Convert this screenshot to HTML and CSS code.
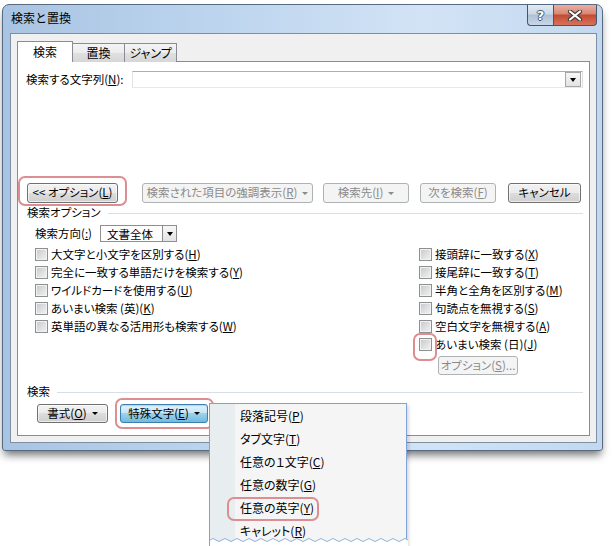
FILE: index.html
```html
<!DOCTYPE html>
<html lang="ja">
  <head>
    <meta charset="UTF-8" />
    <title>検索と置換</title>
    <link rel="stylesheet" href="styles.css">
  </head>
  <body>
    <div class="window">
      <div class="titlebar">
        <span class="title">検索と置換</span>
        <div class="caption-buttons">
          <span class="cap-btn help">?</span>
          <span class="cap-btn close">
            <svg width="16" height="11" viewBox="0 0 16 11">
              <path d="M3 1.5 L13 9.5 M13 1.5 L3 9.5" stroke="#3a3a3a" stroke-width="4.2" stroke-linecap="round"/>
              <path d="M3 1.5 L13 9.5 M13 1.5 L3 9.5" stroke="#fff" stroke-width="2.2" stroke-linecap="round"/>
            </svg>
          </span>
        </div>
      </div>

      <div class="client">
        <div class="tabs">
          <div class="tab active">検索</div>
          <div class="tab">置換</div>
          <div class="tab">ジャンプ</div>
        </div>

        <div class="panel">
          <div class="find-row">
            <label class="find-label">検索する文字列(<u>N</u>):</label>
            <div class="combo"><span class="drop-btn"><span class="arrow"></span></span></div>
          </div>

          <div class="action-row">
            <span class="marked btn-options">
              <span class="btn">&lt;&lt; オプション(<u>L</u>)</span>
              <span class="ring ring-options"></span>
            </span>
            <span class="btn disabled btn-highlight">検索された項目の強調表示(<u>R</u>)<span class="caret"></span></span>
            <span class="btn disabled btn-findin">検索先(<u>I</u>)<span class="caret"></span></span>
            <span class="btn disabled btn-next">次を検索(<u>F</u>)</span>
            <span class="btn btn-cancel">キャンセル</span>
          </div>

          <div class="group-head">検索オプション</div>

          <div class="direction-row">
            <label class="direction-label">検索方向(<u>:</u>)</label>
            <div class="select">
              <span class="select-text">文書全体</span>
              <span class="select-btn"><span class="arrow"></span></span>
            </div>
          </div>

          <div class="options">
            <div class="opt-col left">
              <label class="check"><span class="box"></span>大文字と小文字を区別する(<u>H</u>)</label>
              <label class="check"><span class="box"></span>完全に一致する単語だけを検索する(<u>Y</u>)</label>
              <label class="check"><span class="box"></span>ワイルドカードを使用する(<u>U</u>)</label>
              <label class="check"><span class="box"></span>あいまい検索 (英)(<u>K</u>)</label>
              <label class="check"><span class="box"></span>英単語の異なる活用形も検索する(<u>W</u>)</label>
            </div>
            <div class="opt-col right">
              <label class="check"><span class="box"></span>接頭辞に一致する(<u>X</u>)</label>
              <label class="check"><span class="box"></span>接尾辞に一致する(<u>T</u>)</label>
              <label class="check"><span class="box"></span>半角と全角を区別する(<u>M</u>)</label>
              <label class="check"><span class="box"></span>句読点を無視する(<u>S</u>)</label>
              <label class="check"><span class="box"></span>空白文字を無視する(<u>A</u>)</label>
              <label class="check"><span class="box marked"><span class="ring ring-check"></span></span>あいまい検索 (日)(<u>J</u>)</label>
              <span class="btn disabled btn-fuzzy">オプション(<u>S</u>)...</span>
            </div>
          </div>

          <div class="group-head">検索</div>

          <div class="bottom-row">
            <span class="btn btn-format">書式(<u>O</u>)<span class="caret"></span></span>
            <span class="marked btn-special">
              <span class="btn pressed">特殊文字(<u>E</u>)<span class="caret"></span></span>
              <span class="ring ring-special"></span>
            </span>
          </div>
        </div>
      </div>
    </div>

    <div class="menu">
      <div class="menu-item">段落記号(<u>P</u>)</div>
      <div class="menu-item">タブ文字(<u>T</u>)</div>
      <div class="menu-item">任意の１文字(<u>C</u>)</div>
      <div class="menu-item">任意の数字(<u>G</u>)</div>
      <div class="menu-item">任意の英字(<u>Y</u>)<span class="ring ring-item"></span></div>
      <div class="menu-item">キャレット(<u>R</u>)</div>
      <svg class="torn" width="198" height="10" viewBox="0 0 198 10">
        <path d="M0 4 q3 -3 6 0 t6 0 t6 0 t6 0 t6 0 t6 0 t6 0 t6 0 t6 0 t6 0 t6 0 t6 0 t6 0 t6 0 t6 0 t6 0 t6 0 t6 0 t6 0 t6 0 t6 0 t6 0 t6 0 t6 0 t6 0 t6 0 t6 0 t6 0 t6 0 t6 0 t6 0 t6 0 t6 0 L198 10 L0 10 Z" fill="#fff"/>
        <path d="M0 4 q3 -3 6 0 t6 0 t6 0 t6 0 t6 0 t6 0 t6 0 t6 0 t6 0 t6 0 t6 0 t6 0 t6 0 t6 0 t6 0 t6 0 t6 0 t6 0 t6 0 t6 0 t6 0 t6 0 t6 0 t6 0 t6 0 t6 0 t6 0 t6 0 t6 0 t6 0 t6 0 t6 0 t6 0" fill="none" stroke="#8eb0e0" stroke-width="1"/>
      </svg>
    </div>
  </body>
</html>
```

FILE: styles.css
```css
* {
  box-sizing: border-box;
}

body {
  margin: 0;
  width: 612px;
  height: 546px;
  overflow: hidden;
  position: relative;
  background-color: #fff;
  font-family: "Noto Sans CJK JP", sans-serif;
  font-size: 12px;
  font-feature-settings: "palt";
  color: #000;
}

u {
  text-underline-offset: 1px;
}

label {
  cursor: default;
}

/* window frame */

.window {
  width: 601px;
  margin: 4px 0 0 2px;
  padding: 0 5px 7px 7px;
  border: 1px solid #566b82;
  border-radius: 7px 7px 3px 3px;
  background: linear-gradient(to right, #a9c4e2 0%, #bcd4ee 35%, #d2e3f5 70%, #c3d8ef 100%);
  box-shadow: 0 6px 8px -2px rgba(0, 0, 0, 0.55);
}

.titlebar {
  display: flex;
  justify-content: space-between;
  align-items: flex-start;
  height: 28px;
}

.title {
  padding-left: 1px;
  line-height: 25px;
  font-feature-settings: normal;
}

.caption-buttons {
  display: flex;
  height: 21px;
}

.cap-btn {
  display: flex;
  align-items: center;
  justify-content: center;
  height: 21px;
  border: 1px solid #44566b;
  border-top: none;
}

.help {
  width: 26px;
  border-right: none;
  border-radius: 0 0 0 4px;
  background: linear-gradient(#e2eaf3 0%, #cad7e6 45%, #afc0d5 50%, #c8d7e8 100%);
  font-family: "DejaVu Sans", sans-serif;
  font-weight: bold;
  font-size: 13px;
  color: #fff;
  text-shadow: -1px 0 #4b5563, 1px 0 #4b5563, 0 -1px #4b5563, 0 1px #4b5563;
}

.close {
  width: 44px;
  border-radius: 0 0 4px 0;
  background: linear-gradient(#eaafa2 0%, #d98571 45%, #c44a31 50%, #d7725c 100%);
}

.client {
  height: 410px;
  padding: 7px 6px 0 6px;
  border: 1px solid #7d8fa3;
  background-color: #f0f0f0;
}

/* tabs */

.tabs {
  display: flex;
  align-items: flex-end;
  height: 21px;
  margin-bottom: -1px;
  position: relative;
  z-index: 1;
}

.tab {
  width: 53px;
  height: 19px;
  margin-left: -1px;
  border: 1px solid #898c95;
  border-bottom: none;
  background: linear-gradient(#f4f4f4 0%, #ececec 50%, #e0e0e0 50%, #d6d6d6 100%);
  text-align: center;
  line-height: 17px;
}

.tab.active {
  width: 56px;
  height: 21px;
  margin-left: 0;
  background: #fff;
  line-height: 19px;
  position: relative;
  z-index: 1;
}

.panel {
  height: 375px;
  padding: 9px 6px 0 8px;
  border: 1px solid #898c95;
  background-color: #fff;
  font-size: 11.5px;
}

/* find row */

.find-row {
  display: flex;
  height: 17px;
}

.find-label {
  width: 106px;
  line-height: 17px;
}

.combo {
  flex: 1;
  display: flex;
  justify-content: flex-end;
  align-items: center;
  padding-right: 1px;
  border: 1px solid #abadb3;
  border-color: #abadb3 #dbdfe6 #e3e9ef #e2e3ea;
}

.drop-btn,
.select-btn {
  display: flex;
  align-items: center;
  justify-content: center;
  width: 16px;
  height: 15px;
  border: 1px solid #a7a7a7;
  background: linear-gradient(#f7f7f7, #e3e3e3);
}

.arrow {
  width: 0;
  height: 0;
  border-left: 3.5px solid transparent;
  border-right: 3.5px solid transparent;
  border-top: 4px solid #000;
  margin-top: 1px;
}

/* buttons */

.btn {
  display: flex;
  align-items: center;
  justify-content: center;
  height: 20px;
  border: 1px solid #707070;
  border-radius: 3px;
  background: linear-gradient(#f2f2f2 0%, #ebebeb 50%, #dddddd 50%, #cfcfcf 100%);
  box-shadow: inset 0 0 0 1px rgba(255, 255, 255, 0.6);
  white-space: nowrap;
  line-height: 1;
}

.btn.disabled {
  border-color: #adb2b5;
  background: #f4f4f4;
  box-shadow: none;
  color: #8a8a8a;
}

.btn.pressed {
  border-color: #3c7fb1;
  background: linear-gradient(#e3f3fc 0%, #c4e4f6 50%, #9dd2ef 50%, #72b9df 100%);
  box-shadow: inset 0 1px 1px rgba(0, 0, 0, 0.15);
}

.caret {
  width: 0;
  height: 0;
  margin-left: 5px;
  border-left: 3px solid transparent;
  border-right: 3px solid transparent;
  border-top: 3px solid currentColor;
}

.marked {
  position: relative;
  display: block;
}

.ring {
  position: absolute;
  border: 2px solid #dc8e90;
  border-radius: 7px;
  pointer-events: none;
}

.action-row {
  display: flex;
  height: 20px;
  margin-top: 95px;
}

.btn-options {
  width: 91px;
  margin-left: 1px;
}

.ring-options {
  top: -7px;
  right: -9px;
  bottom: -3px;
  left: -9px;
}

.btn-highlight {
  width: 171px;
  margin-left: 24px;
}

.btn-findin {
  width: 86px;
  margin-left: 10px;
}

.btn-next {
  width: 76px;
  margin-left: 11px;
}

.btn-cancel {
  width: 73px;
  margin-left: 12px;
}

/* group headings */

.group-head {
  display: flex;
  align-items: center;
  height: 16px;
  margin-top: 1px;
  padding-left: 1px;
  line-height: 16px;
}

.group-head::after {
  content: "";
  flex: 1;
  height: 1px;
  margin: 2px 0 0 7px;
  background-color: #d5dfe5;
}

/* search direction */

.direction-row {
  display: flex;
  height: 17px;
  margin-top: 5px;
  padding-left: 9px;
}

.direction-label {
  width: 65px;
  line-height: 17px;
}

.select {
  display: flex;
  align-items: center;
  justify-content: space-between;
  width: 77px;
  padding: 0 0 0 6px;
  border: 1px solid #8f8f8f;
}

.select-btn {
  width: 14px;
  height: 15px;
  border-color: #8a8a8a;
  border-width: 0 0 0 1px;
}

/* checkboxes */

.options {
  display: flex;
  margin-top: 3px;
  padding-left: 9px;
}

.opt-col.left {
  width: 384px;
}

.opt-col {
  display: flex;
  flex-direction: column;
}

.check {
  display: flex;
  align-items: center;
  height: 18px;
  white-space: nowrap;
}

.box {
  width: 13px;
  height: 13px;
  margin-right: 3px;
  border: 1px solid #8e8f8f;
  background: linear-gradient(135deg, #c4c7cb 0%, #dfe0e2 55%, #f2f2f2 100%);
  box-shadow: inset 0 0 0 1px #f2f2f2;
}

.box.marked {
  display: block;
  position: relative;
}

.ring-check {
  top: -6px;
  right: -6px;
  bottom: -11px;
  left: -7px;
}

.btn-fuzzy {
  width: 80px;
  height: 19px;
  margin: 3px 0 0 19px;
}

/* bottom buttons */

.options + .group-head {
  margin-top: 8px;
}

.bottom-row {
  display: flex;
  height: 19px;
  margin-top: 5px;
  padding-left: 11px;
}

.bottom-row .btn {
  height: 19px;
}

.btn-format {
  width: 71px;
}

.btn-special {
  width: 88px;
  margin-left: 12px;
}

.ring-special {
  top: -6px;
  right: -6px;
  bottom: -6px;
  left: -5px;
}

/* popup menu */

.menu {
  position: absolute;
  left: 209px;
  top: 403px;
  width: 198px;
  height: 143px;
  padding-top: 0;
  border: 1px solid #7fa2d8;
  border-bottom: none;
  background: linear-gradient(to right, #e8edef 0, #e8edef 25px, #f5f5f5 25px);
  box-shadow: 2px 2px 3px rgba(0, 0, 0, 0.15);
}

.menu-item {
  position: relative;
  height: 23px;
  padding-left: 30px;
  line-height: 23px;
  white-space: nowrap;
}

.ring-item {
  top: 1px;
  left: 17px;
  width: 92px;
  height: 24px;
}

.torn {
  position: absolute;
  left: -1px;
  bottom: 0;
  width: 200px;
}
```
